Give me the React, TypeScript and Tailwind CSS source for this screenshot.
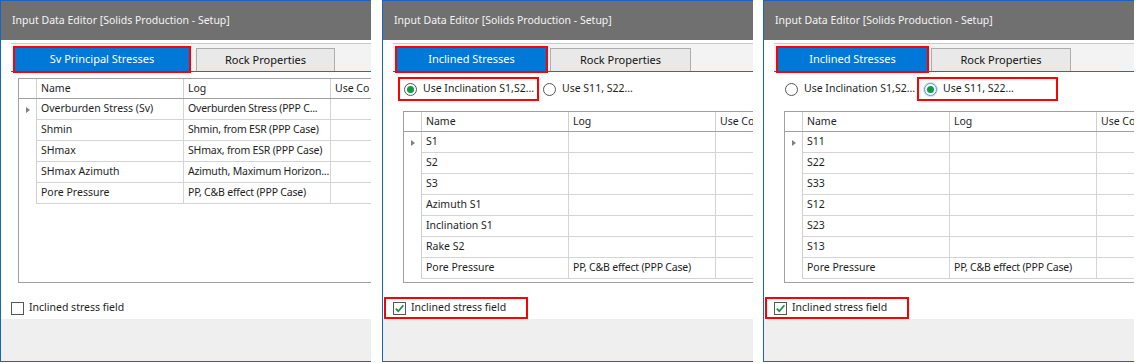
import React from 'react';

type Row = { name: string; log: string };

const panel1Rows: Row[] = [
  { name: 'Overburden Stress (Sv)', log: 'Overburden Stress (PPP C...' },
  { name: 'Shmin', log: 'Shmin, from ESR (PPP Case)' },
  { name: 'SHmax', log: 'SHmax, from ESR (PPP Case)' },
  { name: 'SHmax Azimuth', log: 'Azimuth, Maximum Horizon...' },
  { name: 'Pore Pressure', log: 'PP, C&B effect (PPP Case)' },
];

const panel2Rows: Row[] = [
  { name: 'S1', log: '' },
  { name: 'S2', log: '' },
  { name: 'S3', log: '' },
  { name: 'Azimuth S1', log: '' },
  { name: 'Inclination S1', log: '' },
  { name: 'Rake S2', log: '' },
  { name: 'Pore Pressure', log: 'PP, C&B effect (PPP Case)' },
];

const panel3Rows: Row[] = [
  { name: 'S11', log: '' },
  { name: 'S22', log: '' },
  { name: 'S33', log: '' },
  { name: 'S12', log: '' },
  { name: 'S23', log: '' },
  { name: 'S13', log: '' },
  { name: 'Pore Pressure', log: 'PP, C&B effect (PPP Case)' },
];

const Radio: React.FC<{ checked: boolean; focused?: boolean }> = ({ checked, focused }) => (
  <span
    className={`flex h-[13px] w-[13px] shrink-0 items-center justify-center rounded-full border bg-white ${
      focused ? 'border-[#5a9ad6] shadow-[0_0_0_1px_#cfe3f5]' : 'border-[#555555]'
    }`}
  >
    {checked && <span className="h-[7px] w-[7px] rounded-full bg-[#109a45]" />}
  </span>
);

const CheckBox: React.FC<{ checked: boolean }> = ({ checked }) => (
  <span className="flex h-[13px] w-[13px] shrink-0 items-center justify-center border border-[#555555] bg-white">
    {checked && (
      <svg width="11" height="11" viewBox="0 0 11 11">
        <path d="M1.8 5.6 L4.3 8.2 L9.4 2.2" fill="none" stroke="#1c8f3e" strokeWidth={1.7} />
      </svg>
    )}
  </span>
);

interface PanelProps {
  tab: string;
  tabW: string;
  rockW: string;
  tabGap: string;
  radio: 0 | 1 | 2;
  gridMl: string;
  rows: Row[];
  checked: boolean;
  outer: string;
}

const Panel: React.FC<PanelProps> = ({ tab, tabW, rockW, tabGap, radio, gridMl, rows, checked, outer }) => (
  <div
    className={`flex h-[362px] w-[371px] shrink-0 flex-col overflow-hidden border-y border-l border-[#1a63c6] ${outer}`}
  >
    <div className="flex h-[39px] shrink-0 items-center bg-[#707070] pl-[11px] text-[10.5px] text-[#f4f4f4] whitespace-nowrap">
      Input Data Editor [Solids Production - Setup]
    </div>

    <div className="flex h-[279px] shrink-0 flex-col bg-white">
      <div
        className={`ml-[10px] mt-[3px] flex h-[29px] shrink-0 items-end border-t border-b border-t-[#c9c9c9] border-b-[#0078d7] bg-[#f3f3f3] pl-[4px] ${tabGap}`}
      >
        <div
          className={`flex h-[23px] items-center justify-center bg-[#0078d7] text-[11px] text-white outline-2 outline-[#ff0000] whitespace-nowrap ${tabW}`}
        >
          {tab}
        </div>
        <div
          className={`flex h-[23px] items-center justify-center border-x border-t border-[#adadad] bg-[#e9e9e9] text-[11px] text-[#111111] whitespace-nowrap ${rockW}`}
        >
          Rock Properties
        </div>
      </div>

      {radio !== 0 && (
        <div className="mt-[7px] flex h-[20px] shrink-0 items-center">
          <div
            className={`ml-[17px] flex h-[20px] w-[137px] items-center gap-[6px] pl-[4px] whitespace-nowrap ${
              radio === 1 ? 'outline-2 outline-[#ff0000]' : ''
            }`}
          >
            <Radio checked={radio === 1} />
            <span>Use Inclination S1,S2...</span>
          </div>
          <div
            className={`ml-[1px] flex h-[20px] w-[137px] items-center gap-[6px] pl-[5px] whitespace-nowrap ${
              radio === 2 ? 'outline-2 outline-[#ff0000]' : ''
            }`}
          >
            <Radio checked={radio === 2} focused={radio === 2} />
            <span>Use S11, S22...</span>
          </div>
        </div>
      )}

      <div
        className={`${radio === 0 ? 'mt-[6px]' : 'mt-[12px]'} ${gridMl} min-h-0 w-[420px] flex-1 border-b border-l border-[#a0a0a0]`}
      >
        <div className="flex h-[21px] border-y border-[#a0a0a0]">
          <div className="w-[18px] shrink-0 border-r border-[#d0d0d0]" />
          <div className="flex w-[147px] shrink-0 items-center border-r border-[#d0d0d0] pl-[4px]">Name</div>
          <div className="flex w-[147px] shrink-0 items-center border-r border-[#d0d0d0] pl-[4px]">Log</div>
          <div className="flex w-[100px] shrink-0 items-center pl-[4px] whitespace-nowrap">Use Co</div>
        </div>
        {rows.map((r, i) => (
          <div key={r.name} className="flex h-[21px]">
            <div className="flex w-[18px] shrink-0 items-center justify-center border-r border-[#d0d0d0]">
              {i === 0 && (
                <span className="h-0 w-0 border-y-[3.5px] border-l-[4px] border-y-transparent border-l-[#808080]" />
              )}
            </div>
            <div className="flex w-[147px] shrink-0 items-center overflow-hidden border-r border-b border-[#d4d4d4] pl-[4px] whitespace-nowrap">
              {r.name}
            </div>
            <div className="flex w-[147px] shrink-0 items-center overflow-hidden border-r border-b border-[#d4d4d4] pl-[4px] tracking-[-0.2px] whitespace-nowrap">
              {r.log}
            </div>
            <div className="w-[100px] shrink-0 border-b border-[#d4d4d4]" />
          </div>
        ))}
      </div>

      <div
        className={`mb-[2px] ml-[3px] mt-[16px] flex h-[18px] w-[140px] shrink-0 items-center gap-[5px] pl-[7px] whitespace-nowrap ${
          checked ? 'outline-2 outline-[#ff0000]' : ''
        }`}
      >
        <CheckBox checked={checked} />
        <span>Inclined stress field</span>
      </div>
    </div>

    <div className="h-[42px] shrink-0 bg-[#efefef]" />
  </div>
);

export default function App() {
  return (
    <div className="flex h-[363px] w-[1144px] bg-white font-['Noto_Sans',sans-serif] text-[10.5px] text-[#1e1e1e]">
      <Panel
        tab="Sv Principal Stresses"
        tabW="w-[174px]"
        rockW="w-[139px]"
        tabGap="gap-[7px]"
        radio={0}
        gridMl="ml-[17px]"
        rows={panel1Rows}
        checked={false}
        outer=""
      />
      <Panel
        tab="Inclined Stresses"
        tabW="w-[149px]"
        rockW="w-[141px]"
        tabGap="gap-[4px]"
        radio={1}
        gridMl="ml-[20px]"
        rows={panel2Rows}
        checked={true}
        outer="ml-[11px]"
      />
      <Panel
        tab="Inclined Stresses"
        tabW="w-[149px]"
        rockW="w-[140px]"
        tabGap="gap-[4px]"
        radio={2}
        gridMl="ml-[20px]"
        rows={panel3Rows}
        checked={true}
        outer="ml-[10px]"
      />
    </div>
  );
}
